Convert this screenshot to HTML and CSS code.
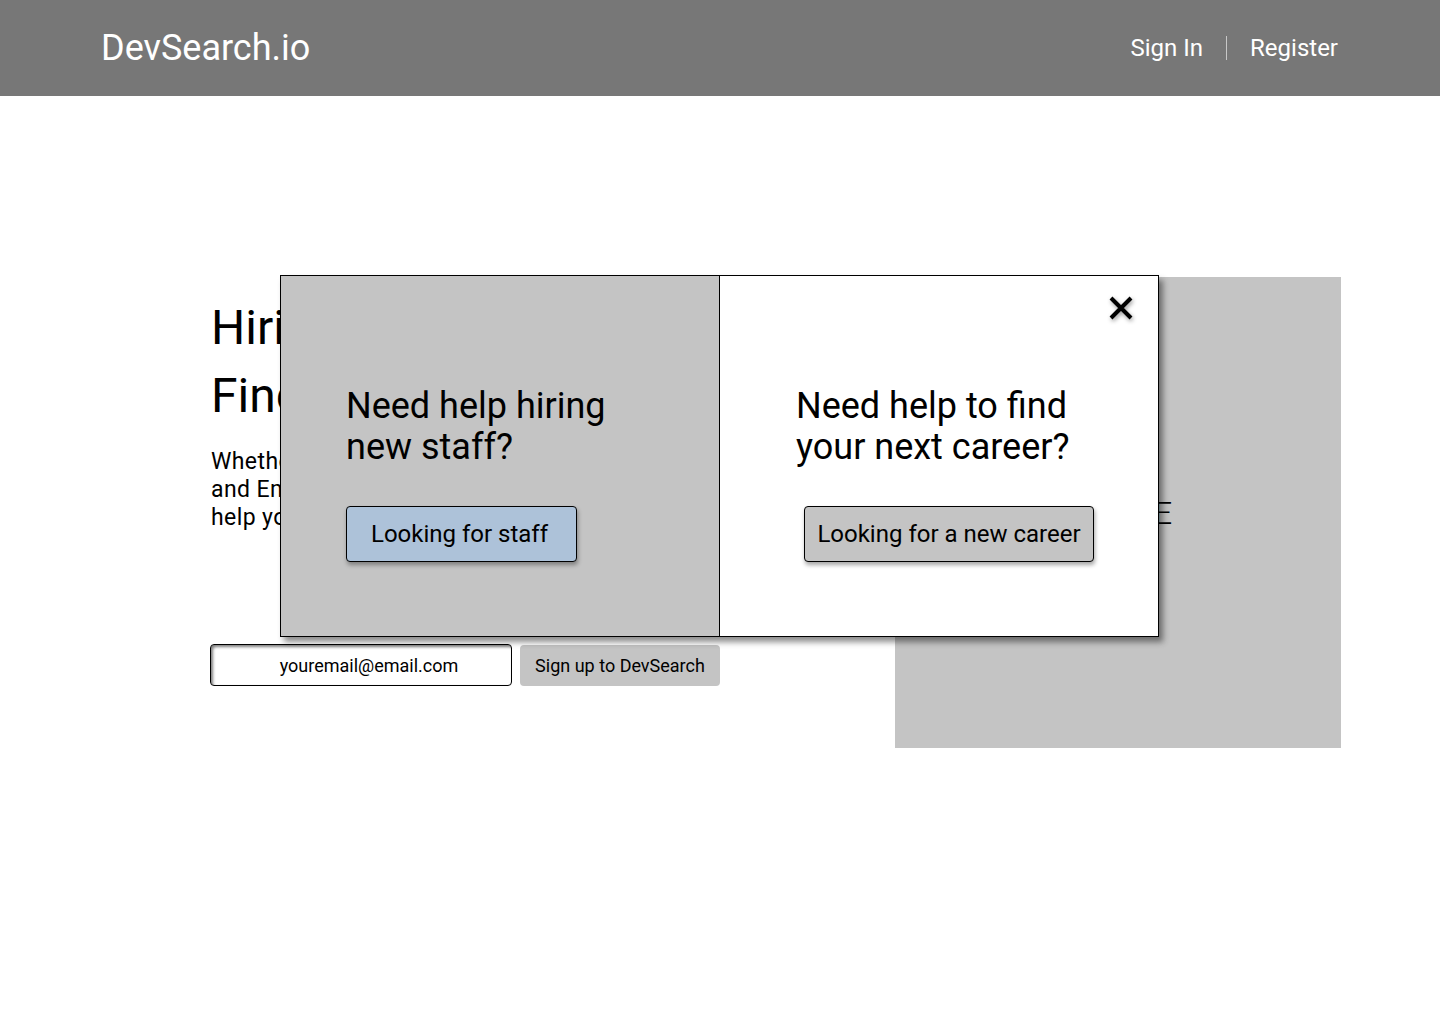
FILE: index.html
```html
<!DOCTYPE html>
<html lang="en">
<head>
<meta charset="utf-8">
<title>DevSearch.io</title>
<link rel="stylesheet" href="styles.css">
</head>
<body>
<header class="topbar">
  <div class="logo">DevSearch.io</div>
  <nav class="nav">
    <a class="nav-link" href="#">Sign In</a>
    <span class="nav-sep"></span>
    <a class="nav-link" href="#">Register</a>
  </nav>
</header>

<main class="hero">
  <section class="hero-copy">
    <h1 class="hero-title">Hiring Developers?<br>Find Your Next Role.</h1>
    <p class="hero-text">Whether you are a Developer, Recruiter<br>and Employer, DevSearch.io is here to<br>help you.</p>
    <form class="signup">
      <input class="email" type="text" value="youremail@email.com">
      <button class="signup-btn" type="button">Sign up to DevSearch</button>
    </form>
  </section>
  <div class="hero-image"><span class="image-label">IMAGE</span></div>

  <div class="modal">
    <div class="panel panel-staff">
      <h2 class="panel-title">Need help hiring<br>new staff?</h2>
      <button class="choice choice-staff" type="button">Looking for staff</button>
    </div>
    <div class="panel panel-career">
      <h2 class="panel-title">Need help to find<br>your next career?</h2>
      <button class="choice choice-career" type="button">Looking for a new career</button>
    </div>
    <button class="close" type="button" aria-label="Close">
      <svg width="26" height="26" viewBox="0 0 26 26"><path d="M3 3 L23 23 M23 3 L3 23" stroke="#000" stroke-width="4" fill="none"/></svg>
    </button>
  </div>
</main>
</body>
</html>
```

FILE: styles.css
```css
* { box-sizing: border-box; }
html, body { margin: 0; padding: 0; }
body {
  font-family: Roboto, "Liberation Sans", Arial, sans-serif;
  color: #000;
  background: #fff;
  width: 1440px;
  height: 1024px;
  overflow: hidden;
}

.topbar {
  height: 96px;
  background: #777777;
  display: flex;
  align-items: center;
  justify-content: space-between;
  padding: 0 102px 0 101px;
}
.logo {
  color: #fff;
  font-size: 36px;
  font-weight: 400;
}
.nav {
  display: flex;
  align-items: center;
  gap: 23px;
}
.nav-link {
  color: #fff;
  text-decoration: none;
  font-size: 24px;
}
.nav-sep {
  width: 1px;
  height: 24px;
  background: #c8c8c8;
}

.hero {
  position: relative;
  display: flex;
  align-items: flex-start;
  padding: 181px 0 0 211px;
}
.hero-copy {
  width: 684px;
  padding-top: 17px;
}
.hero-title {
  margin: 0;
  font-size: 48px;
  font-weight: 400;
  line-height: 68px;
}
.hero-text {
  margin: 18px 0 0;
  font-size: 23px;
  letter-spacing: 0.4px;
  line-height: 28px;
}
.signup {
  display: flex;
  gap: 8px;
  margin-top: 112px;
  margin-left: -1px;
}
.email {
  width: 302px;
  height: 42px;
  border: 1px solid #000;
  border-radius: 4px;
  box-shadow: inset 2px 2px 3px rgba(0,0,0,0.5);
  font-family: Roboto, "Liberation Sans", Arial, sans-serif;
  font-size: 18px;
  color: #000;
  text-align: center;
  padding: 0 0 0 16px;
  background: #fff;
}
.signup-btn {
  width: 200px;
  height: 41px;
  margin-top: 1px;
  border: none;
  border-radius: 4px;
  background: #c4c4c4;
  font-family: Roboto, "Liberation Sans", Arial, sans-serif;
  font-size: 18px;
  color: #000;
  padding: 0;
}

.hero-image {
  width: 446px;
  height: 471px;
  background: #c4c4c4;
  display: flex;
  align-items: center;
  justify-content: center;
}
.image-label {
  font-size: 32px;
  font-weight: 300;
  letter-spacing: 3px;
  padding-left: 3px;
}

.modal {
  position: absolute;
  left: 280px;
  top: 179px;
  width: 879px;
  height: 362px;
  display: flex;
  border: 1px solid #000;
  background: #fff;
  box-shadow: 4px 5px 6px rgba(0,0,0,0.45);
}
.panel {
  padding-top: 110px;
}
.panel-staff {
  width: 439px;
  flex: none;
  background: #c4c4c4;
  border-right: 1px solid #000;
  padding-left: 65px;
}
.panel-career {
  flex: 1;
  background: #fff;
  padding-left: 76px;
}
.panel-title {
  margin: 0;
  font-size: 36px;
  font-weight: 400;
  line-height: 41px;
}
.choice {
  display: block;
  height: 56px;
  margin-top: 38px;
  border: 1px solid #000;
  border-radius: 4px;
  font-family: Roboto, "Liberation Sans", Arial, sans-serif;
  font-size: 24px;
  color: #000;
  box-shadow: 1px 3px 4px rgba(0,0,0,0.35);
  padding: 0;
}
.choice-staff {
  width: 231px;
  background: #adc2d9;
  padding-right: 4px;
}
.choice-career {
  width: 290px;
  margin-left: 8px;
  background: #c4c4c4;
}
.close {
  position: absolute;
  top: 19px;
  right: 24px;
  width: 26px;
  height: 26px;
  padding: 0;
  border: none;
  background: transparent;
  filter: drop-shadow(1px 2px 2px rgba(0,0,0,0.4));
}
.close svg { display: block; }
```
